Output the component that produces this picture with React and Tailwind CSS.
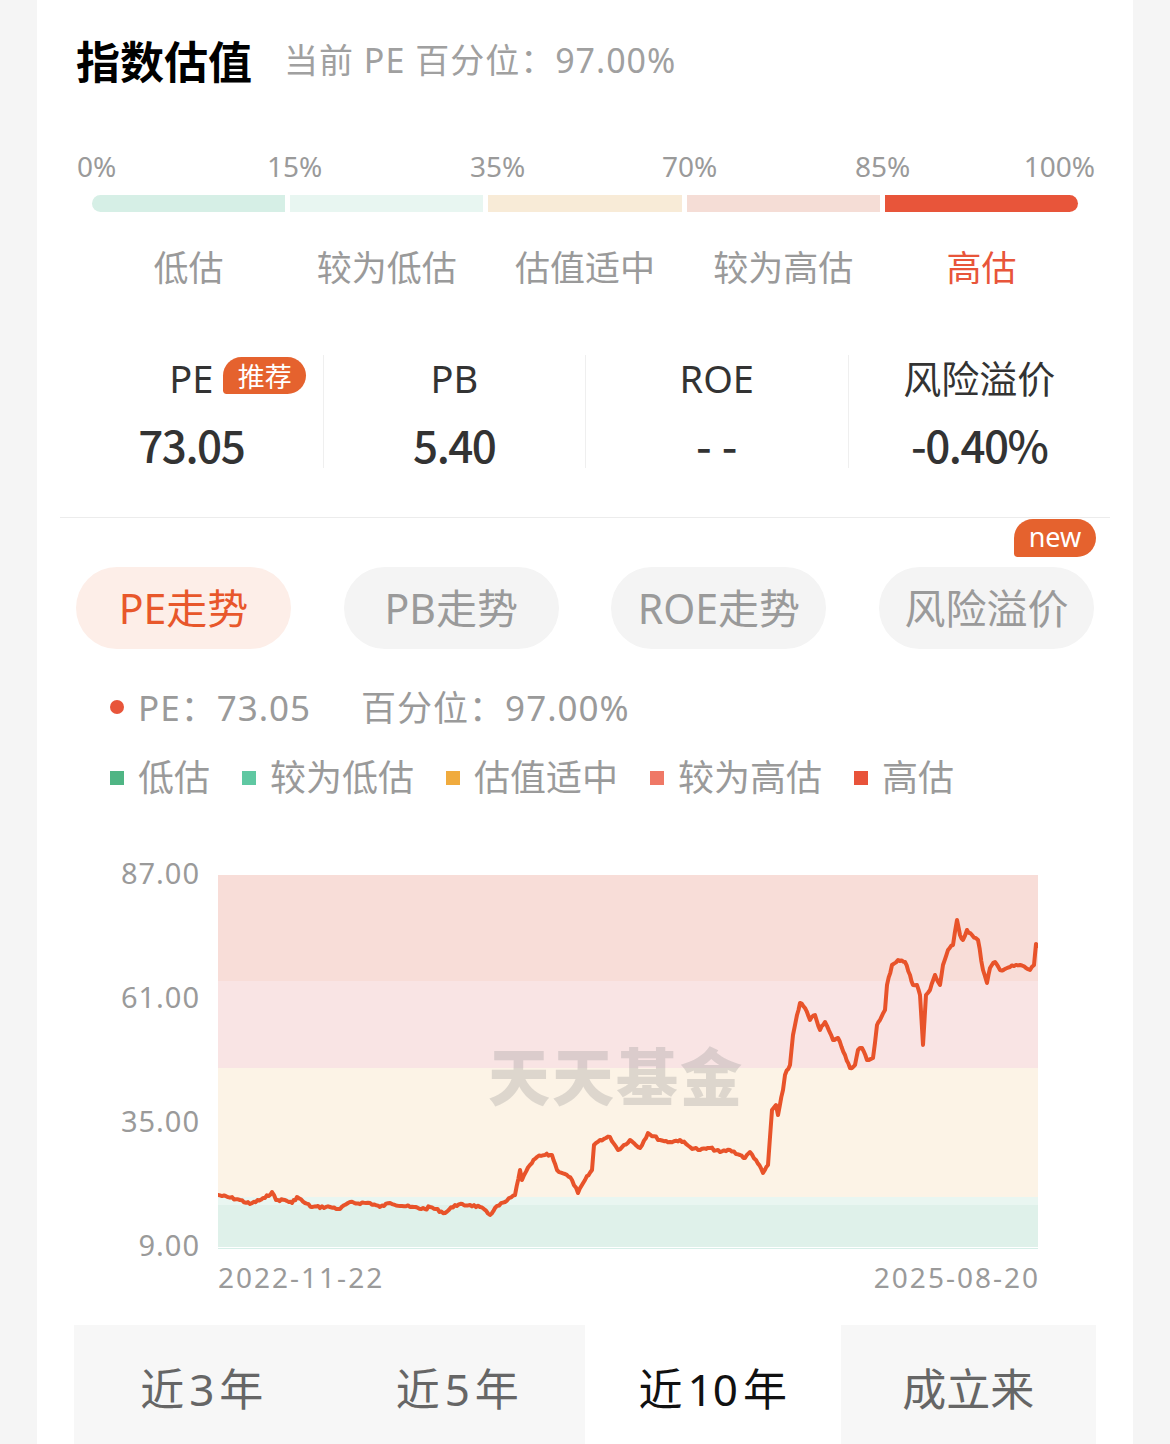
const FONT = "font-['Noto_Sans','Noto_Sans_CJK_SC',sans-serif]"
const CJK = "font-['Noto_Sans_CJK_SC',sans-serif]"

const SCALE = [
  { label: '0%', w: 'w-[190px]' },
  { label: '15%', w: 'w-[203px]' },
  { label: '35%', w: 'w-[192px]' },
  { label: '70%', w: 'w-[193px]' },
  { label: '85%', w: 'w-[164px]' },
  { label: '100%', w: 'flex-1 text-right' },
]

const SEGMENTS = [
  { name: '低估', bar: 'bg-[#d6efe6] rounded-l-full', legend: 'bg-[#4fb584]' },
  { name: '较为低估', bar: 'bg-[#e8f6f1]', legend: 'bg-[#5fc8a2]' },
  { name: '估值适中', bar: 'bg-[#f8ebd7]', legend: 'bg-[#f0ab3e]' },
  { name: '较为高估', bar: 'bg-[#f5ddd6]', legend: 'bg-[#ef7866]' },
  { name: '高估', bar: 'bg-[#e8553a] rounded-r-full', legend: 'bg-[#e8533a]', active: true },
]

const STATS = [
  { label: 'PE', value: '73.05', badge: true },
  { label: 'PB', value: '5.40' },
  { label: 'ROE', value: '--', dash: true },
  { label: '风险溢价', value: '-0.40%' },
]

const TABS = ['PE走势', 'PB走势', 'ROE走势', '风险溢价']
const RANGES = [
  { pre: '近', num: '3', post: '年' },
  { pre: '近', num: '5', post: '年' },
  { pre: '近', num: '10', post: '年', active: true },
  { pre: '成立来' },
]

// key points traced from the chart, in page pixels
const KEY = [
  [218, 1195], [240, 1200], [250, 1204], [265, 1198], [272, 1192], [276, 1200], [285, 1200], [292, 1203],
  [297, 1197], [305, 1203], [312, 1207], [330, 1207], [340, 1209], [348, 1203], [370, 1203], [380, 1207],
  [390, 1203], [410, 1207], [425, 1209], [430, 1207], [445, 1213], [455, 1205], [470, 1205], [480, 1207],
  [490, 1215], [495, 1208], [505, 1202], [515, 1195], [520, 1170], [522, 1180], [530, 1165], [537, 1157],
  [545, 1155], [552, 1155], [557, 1170], [565, 1174], [572, 1180], [578, 1193], [585, 1180], [592, 1170],
  [594, 1145], [600, 1140], [610, 1137], [618, 1150], [630, 1140], [640, 1148], [648, 1133], [660, 1140],
  [670, 1142], [680, 1140], [690, 1147], [700, 1150], [710, 1148], [720, 1152], [730, 1150], [740, 1155],
  [745, 1158], [750, 1152], [756, 1160], [763, 1173], [768, 1165], [772, 1110], [776, 1105], [778, 1115],
  [783, 1090], [785, 1075], [790, 1065], [793, 1035], [797, 1015], [800, 1003], [805, 1008], [810, 1020],
  [815, 1015], [820, 1030], [825, 1022], [833, 1040], [838, 1038], [845, 1055], [850, 1068], [855, 1065],
  [858, 1050], [862, 1048], [867, 1060], [873, 1058], [877, 1025], [880, 1020], [885, 1010], [887, 985],
  [892, 965], [898, 960], [905, 962], [910, 975], [913, 985], [917, 985], [920, 995], [923, 1045],
  [926, 995], [930, 990], [935, 975], [940, 985], [943, 965], [948, 950], [953, 945], [957, 920],
  [960, 935], [963, 940], [967, 930], [972, 935], [978, 940], [983, 970], [987, 983], [990, 968],
  [995, 962], [1000, 970], [1010, 967], [1020, 965], [1030, 970], [1034, 965], [1036, 944], [1038, 946],
]

function buildPath() {
  let seed = 7
  const rnd = () => {
    seed = (seed * 9301 + 49297) % 233280
    return seed / 233280
  }
  const pts = []
  for (let i = 0; i < KEY.length - 1; i++) {
    const [x0, y0] = KEY[i]
    const [x1, y1] = KEY[i + 1]
    const n = Math.max(1, Math.round((x1 - x0) / 2))
    for (let k = 0; k < n; k++) {
      const t = k / n
      const j = k === 0 ? 0 : (rnd() - 0.5) * 2.6
      pts.push([x0 + (x1 - x0) * t - 218, y0 + (y1 - y0) * t + j - 875])
    }
  }
  const last = KEY[KEY.length - 1]
  pts.push([last[0] - 218, last[1] - 875])
  return pts.map((p, i) => `${i ? 'L' : 'M'}${p[0].toFixed(1)} ${p[1].toFixed(1)}`).join(' ')
}

const LINE = buildPath()

function Badge({ children, className = '' }) {
  return (
    <span
      className={`inline-flex items-center justify-center rounded-tl-[20px] rounded-tr-[20px] rounded-br-[20px] rounded-bl-[4px] bg-[#e5622e] text-white ${className}`}
    >
      {children}
    </span>
  )
}

export default function App() {
  return (
    <div className={`min-h-screen bg-[#f5f5f5] ${FONT}`}>
      <div className="mx-auto w-[1096px] bg-white pt-[30px]">
        {/* header */}
        <div className="flex h-[60px] items-center px-[39px]">
          <h1 className={`${CJK} text-[44px] font-bold leading-none text-black`}>指数估值</h1>
          <span className="ml-[32px] text-[34px] leading-none tracking-[1px] text-[#a0a0a0]">当前 PE 百分位：97.00%</span>
        </div>

        {/* scale */}
        <div className="mt-[58px] flex h-[36px] items-center pl-[40px] pr-[38px] text-[28px] leading-none text-[#9a9a9a]">
          {SCALE.map((s) => (
            <span key={s.label} className={s.w}>{s.label}</span>
          ))}
        </div>
        <div className="mx-[55px] mt-[11px] grid h-[17px] grid-cols-5 gap-[5px]">
          {SEGMENTS.map((s) => (
            <div key={s.name} className={s.bar} />
          ))}
        </div>
        <div className="mx-[55px] mt-[35px] grid h-[40px] grid-cols-5 gap-[5px]">
          {SEGMENTS.map((s) => (
            <div
              key={s.name}
              className={`flex items-center justify-center text-[35px] leading-none ${s.active ? 'text-[#e8553a]' : 'text-[#9a9a9a]'}`}
            >
              {s.name}
            </div>
          ))}
        </div>

        {/* stats */}
        <div className="mx-[23px] mt-[68px] grid grid-cols-4">
          {STATS.map((s, i) => (
            <div key={s.label} className={`flex h-[113px] flex-col items-center ${i ? 'border-l border-[#efefef]' : ''}`}>
              <div className="relative flex h-[46px] items-center text-[38px] leading-none text-[#333]">
                {s.label}
                {s.badge && (
                  <Badge className={`${CJK} absolute left-[calc(100%+10px)] top-[2px] h-[37px] w-[83px] text-[27px] leading-none`}>
                    推荐
                  </Badge>
                )}
              </div>
              <div
                className={`${CJK} mt-[19px] flex h-[48px] items-center text-[44px] font-medium leading-none text-[#333] ${
                  s.dash ? 'pl-[10px] tracking-[10px] font-bold' : 'tracking-[-1.5px]'
                }`}
              >
                {s.value}
              </div>
            </div>
          ))}
        </div>
        <div className="mx-[23px] mt-[49px] h-px bg-[#ececec]" />

        {/* trend tabs */}
        <div className="mx-[39px] mt-[49px] flex justify-between">
          {TABS.map((t, i) => (
            <div
              key={t}
              className={`relative flex h-[82px] w-[215px] items-center justify-center rounded-full text-[41px] leading-none ${
                i === 0 ? 'bg-[#fdeee8] text-[#e8572b]' : 'bg-[#f4f4f4] text-[#9a9a9a]'
              }`}
            >
              {t}
              {i === 3 && (
                <Badge className="absolute right-[-2px] top-[-48px] h-[38px] w-[82px] pb-[4px] text-[27px] leading-none">
                  new
                </Badge>
              )}
            </div>
          ))}
        </div>

        {/* current value */}
        <div className="mt-[38px] flex h-[40px] items-center pl-[73px] text-[35px] leading-none tracking-[1px] text-[#9a9a9a]">
          <span className="mr-[14px] h-[14px] w-[14px] rounded-full bg-[#e8553a]" />
          <span>PE：73.05</span>
          <span className="ml-[50px]">百分位：97.00%</span>
        </div>

        {/* legend */}
        <div className="mt-[31px] flex h-[40px] items-center gap-[32px] pl-[73px] text-[36px] leading-none text-[#9a9a9a]">
          {SEGMENTS.map((s) => (
            <div key={s.name} className="flex items-center gap-[14px]">
              <span className={`h-[14px] w-[14px] ${s.legend}`} />
              <span>{s.name}</span>
            </div>
          ))}
        </div>

        {/* chart */}
        <div className="mt-[58px] flex items-start">
          <div className="flex h-[406px] w-[163px] flex-col items-end justify-between text-[29px] leading-[34px] tracking-[1px] text-[#9a9a9a]">
            <span>87.00</span>
            <span>61.00</span>
            <span>35.00</span>
            <span>9.00</span>
          </div>
          <div className="ml-[18px] w-[820px]">
            <div className="relative mt-[19px] h-[374px]">
              <svg width="820" height="374" viewBox="0 0 820 374" className="block">
                <rect x="0" y="0" width="820" height="106" fill="#f8ddd8" />
                <rect x="0" y="106" width="820" height="87" fill="#f9e4e4" />
                <rect x="0" y="193" width="820" height="129" fill="#fcf3e6" />
                <rect x="0" y="322" width="820" height="8" fill="#e9f6f1" />
                <rect x="0" y="330" width="820" height="42" fill="#dff1ea" />
                <rect x="0" y="373" width="820" height="1" fill="#d6efe8" />
                <path d={LINE} fill="none" stroke="#e8532a" strokeWidth="4" strokeLinejoin="round" strokeLinecap="round" />
              </svg>
              <div className={`${CJK} pointer-events-none absolute left-[270px] top-[168px] text-[62px] font-black leading-none tracking-[2px] text-[rgba(150,150,150,0.3)]`}>
                天天基金
              </div>
            </div>
            <div className="mt-[11px] flex h-[34px] items-center justify-between text-[28px] leading-none tracking-[2px] text-[#9a9a9a]">
              <span>2022-11-22</span>
              <span className="mr-[-2px]">2025-08-20</span>
            </div>
          </div>
        </div>

        {/* range tabs */}
        <div className="mx-[37px] mt-[31px] grid h-[130px] grid-cols-4">
          {RANGES.map((r) => (
            <div
              key={r.pre + (r.num || '')}
              className={`flex h-[130px] items-start justify-center pt-[42px] text-[44px] leading-none ${
                r.active ? 'bg-white text-[#111]' : 'bg-[#f7f7f7] text-[#666]'
              }`}
            >
              {r.pre}
              {r.num && <span className="mx-[5px]">{r.num}</span>}
              {r.post}
            </div>
          ))}
        </div>
      </div>
    </div>
  )
}
